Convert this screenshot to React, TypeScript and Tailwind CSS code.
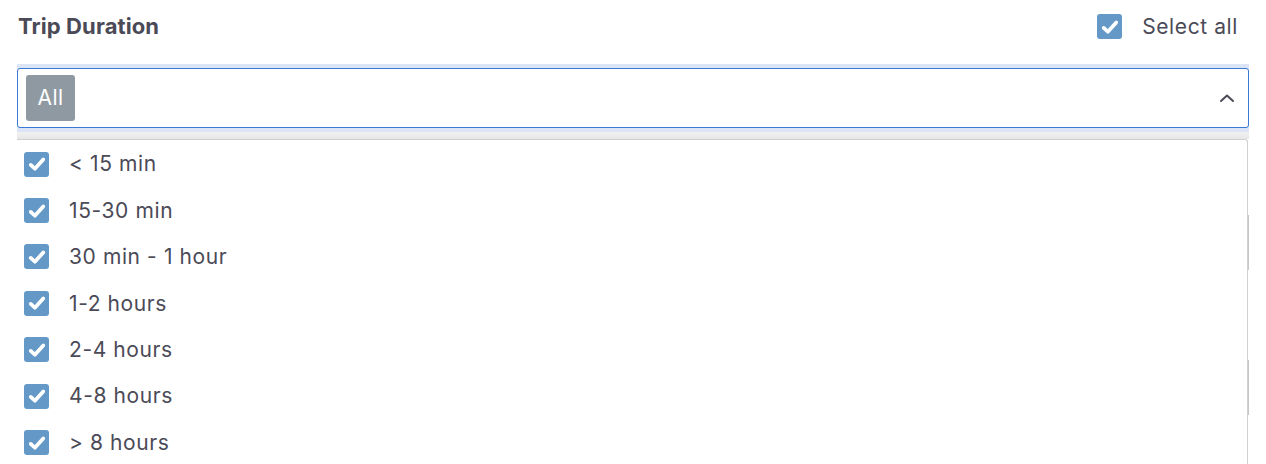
import React from "react";

const items = ["< 15 min", "15-30 min", "30 min - 1 hour", "1-2 hours", "2-4 hours", "4-8 hours", "> 8 hours"];

function Check() {
  return (
    <div className="w-[25px] h-[25px] rounded-[3px] bg-[#6398c7] flex items-center justify-center shrink-0">
      <svg width="20" height="20" viewBox="0 0 16 16" fill="none">
        <path d="M3 8.7 L6.3 11.8 L13 4.4" stroke="white" strokeWidth="3" strokeLinecap="round" strokeLinejoin="round" />
      </svg>
    </div>
  );
}

export default function App() {
  return (
    <div className="w-[1266px] h-[464px] bg-white overflow-hidden relative" style={{ fontFamily: "Inter, 'Noto Sans', sans-serif" }}>
      <div className="flex items-center justify-between pl-[18px] pr-[28px] pt-[1px] h-[52px]">
        <div className="text-[22px] font-bold text-[#4b4a57] tracking-[0.1px]">Trip Duration</div>
        <div className="flex items-center gap-[20px]">
          <Check />
          <span className="text-[21px] text-[#4b4a57] tracking-[0.6px]">Select all</span>
        </div>
      </div>
      <div className="mt-[12px] ml-[17px] w-[1232px]">
        <div className="bg-[#dbe5f5] py-[4px]">
          <div className="h-[60px] bg-white border border-[#3a78d6] rounded-[3px] flex items-center justify-between pl-[8px] pr-[13px]">
            <div className="h-[46px] w-[49px] rounded-[3px] bg-[#8e99a2] text-white text-[21px] tracking-[0.4px] flex items-center justify-center">All</div>
            <svg width="16" height="10" viewBox="0 0 16 10" fill="none">
              <path d="M2 8 L8 2.5 L14 8" stroke="#4b4a57" strokeWidth="2" strokeLinecap="round" strokeLinejoin="round" />
            </svg>
          </div>
        </div>
        <div className="h-[7px] bg-gradient-to-b from-[#f2f2f2] to-[#e6e6e6]" />
      </div>
      <div className="absolute left-[1247px] top-[215px] w-[2px] h-[55px] bg-[#c8c8c8]" />
      <div className="absolute left-[1247px] top-[360px] w-[2px] h-[55px] bg-[#c8c8c8]" />
      <div className="absolute left-[17px] top-[139px] w-[1231px] h-[340px] bg-white border-t border-r border-[#d0d0d0] rounded-tr-[3px] pt-[1px]">
        {items.map((t) => (
          <div key={t} className="h-[46.4px] flex items-center gap-[20px] pl-[7px]">
            <Check />
            <span className="text-[21px] text-[#4b4a57] tracking-[0.6px]">{t}</span>
          </div>
        ))}
      </div>
    </div>
  );
}
